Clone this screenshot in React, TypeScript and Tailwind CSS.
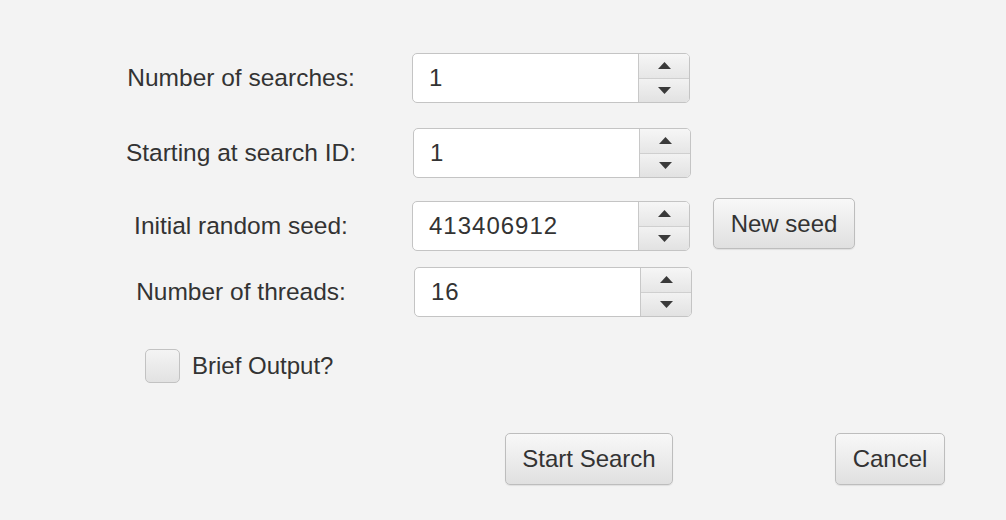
import React from "react";

const font = { fontFamily: '"Liberation Sans", Arial, sans-serif' };

function Spinner({ value, className }: { value: string; className?: string }) {
  return (
    <div
      className={`flex h-[50px] w-[278px] overflow-hidden rounded-[5px] border border-[#c4c4c4] bg-white ${className ?? ""}`}
    >
      <div className="flex flex-1 items-center pl-[16px] text-[24px] tracking-[1px] text-[#333]">{value}</div>
      <div className="flex w-[51px] flex-col border-l border-[#c8c8c8]">
        <div className="flex flex-1 items-center justify-center border-b border-[#cfcfcf] bg-gradient-to-b from-[#f6f6f6] to-[#e6e6e6]">
          <svg width="13" height="7" viewBox="0 0 13 7">
            <path d="M0 7 L6.5 0 L13 7 Z" fill="#3a3a3a" />
          </svg>
        </div>
        <div className="flex flex-1 items-center justify-center bg-gradient-to-b from-[#f2f2f2] to-[#e2e2e2]">
          <svg width="13" height="7" viewBox="0 0 13 7">
            <path d="M0 0 L13 0 L6.5 7 Z" fill="#3a3a3a" />
          </svg>
        </div>
      </div>
    </div>
  );
}

function Button({ children, className }: { children: React.ReactNode; className?: string }) {
  return (
    <div
      className={`flex items-center justify-center rounded-[5px] border border-[#bdbdbd] bg-gradient-to-b from-[#f8f8f8] to-[#e0e0e0] text-[24px] text-[#333] shadow-[0_1px_1px_rgba(0,0,0,0.08)] ${className ?? ""}`}
    >
      {children}
    </div>
  );
}

function Row({ label, value, top, ml, extra }: { label: string; value: string; top: string; ml: string; extra?: React.ReactNode }) {
  return (
    <div className={`flex items-center ${top}`}>
      <div className="ml-[100px] w-[282px] text-center text-[24.5px] text-[#333]">{label}</div>
      <Spinner value={value} className={ml} />
      {extra}
    </div>
  );
}

export default function App() {
  return (
    <div className="flex h-[520px] w-[1006px] flex-col bg-[#f3f3f3]" style={font}>
      <Row label="Number of searches:" value="1" top="mt-[53px]" ml="ml-[30px]" />
      <Row label="Starting at search ID:" value="1" top="mt-[25px]" ml="ml-[31px]" />
      <Row
        label="Initial random seed:"
        value="413406912"
        top="mt-[23px]"
        ml="ml-[30px]"
        extra={<Button className="ml-[23px] h-[51px] w-[142px] self-start -mt-[3px]">New seed</Button>}
      />
      <Row label="Number of threads:" value="16" top="mt-[16px]" ml="ml-[32px]" />
      <div className="ml-[145px] mt-[31px] flex items-center">
        <div className="h-[34px] w-[35px] rounded-[5px] border border-[#c2c2c2] bg-gradient-to-b from-[#f4f4f4] to-[#e2e2e2]" />
        <span className="ml-[12px] text-[24px] text-[#333]">Brief Output?</span>
      </div>
      <div className="mt-[49px] flex">
        <Button className="ml-[505px] h-[52px] w-[168px]">Start Search</Button>
        <Button className="ml-[162px] h-[52px] w-[110px]">Cancel</Button>
      </div>
    </div>
  );
}
